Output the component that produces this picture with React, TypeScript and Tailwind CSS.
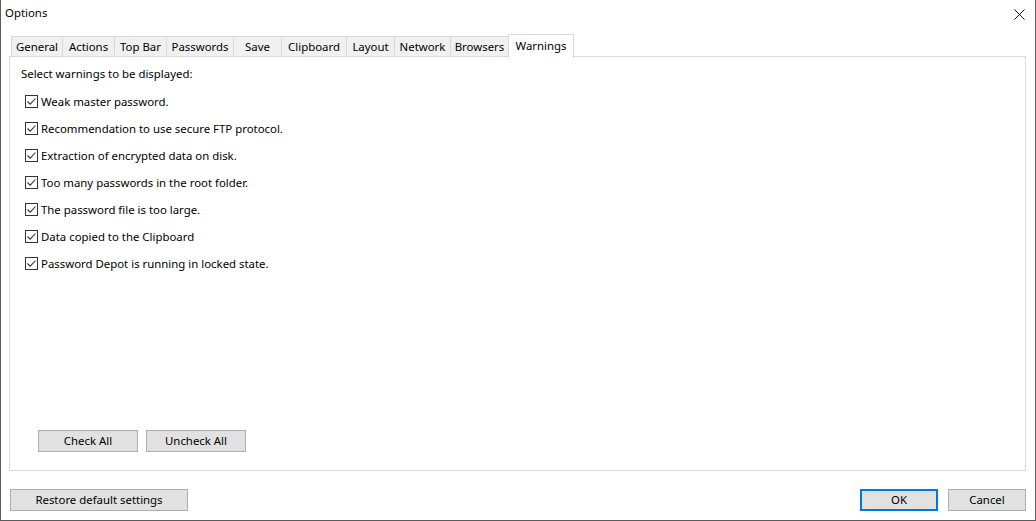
import React from "react";

const tabs: { label: string; w: string }[] = [
  { label: "General", w: "w-[51px]" },
  { label: "Actions", w: "w-[52px]" },
  { label: "Top Bar", w: "w-[52px]" },
  { label: "Passwords", w: "w-[67px]" },
  { label: "Save", w: "w-[48px]" },
  { label: "Clipboard", w: "w-[65px]" },
  { label: "Layout", w: "w-[48px]" },
  { label: "Network", w: "w-[56px]" },
  { label: "Browsers", w: "w-[58px]" },
];

const warnings = [
  "Weak master password.",
  "Recommendation to use secure FTP protocol.",
  "Extraction of encrypted data on disk.",
  "Too many passwords in the root folder.",
  "The password file is too large.",
  "Data copied to the Clipboard",
  "Password Depot is running in locked state.",
];

function CheckBox() {
  return (
    <div className="w-[13px] h-[13px] border border-[#333333] bg-white flex items-center justify-center shrink-0">
      <svg width="11" height="11" viewBox="0 0 11 11">
        <path d="M1.5 5.5 L4.2 8.2 L9.5 2.5" fill="none" stroke="#333333" strokeWidth="1.1" />
      </svg>
    </div>
  );
}

export default function App() {
  return (
    <div
      className="w-[1036px] h-[521px] bg-white border-x border-b border-[#5c5c5c] flex flex-col text-[11.4px] text-black overflow-hidden"
      style={{ fontFamily: '"Noto Sans", "Liberation Sans", sans-serif' }}
    >
      <div className="h-[34px] flex items-start justify-between shrink-0">
        <div className="pl-[4px] pt-[5px] leading-[16px]">Options</div>
        <div className="h-[28px] pr-[10px] flex items-center">
          <svg width="11" height="11" viewBox="0 0 11 11">
            <path d="M0.5 0.5 L10.5 10.5 M10.5 0.5 L0.5 10.5" stroke="#111" strokeWidth="1" />
          </svg>
        </div>
      </div>

      <div className="px-[8px] pr-[9px] flex flex-col shrink-0">
        <div className="h-[22px] flex items-end pl-[2px] relative z-10">
          {tabs.map((t) => (
            <div
              key={t.label}
              className={`${t.w} h-[20px] border-t border-l border-[#d9d9d9] bg-[#f0f0f0] flex items-center justify-center leading-[16px]`}
            >
              {t.label}
            </div>
          ))}
          <div className="w-[66px] h-[24px] mb-[-2px] border-t border-x border-[#d9d9d9] bg-white flex items-start justify-center pt-[3px] leading-[16px]">
            Warnings
          </div>
        </div>
        <div className="h-[415px] border border-[#d9d9d9] bg-white flex flex-col justify-between">
          <div className="pl-[11px]">
            <div className="mt-[9px] h-[16px] leading-[16px]">Select warnings to be displayed:</div>
            <div className="mt-[6px] pl-[4px] flex flex-col">
              {warnings.map((w) => (
                <div key={w} className="h-[27px] flex items-center gap-[3px]">
                  <CheckBox />
                  <span className="leading-[16px]">{w}</span>
                </div>
              ))}
            </div>
          </div>
          <div className="pl-[28px] pb-[18px] flex gap-[8px]">
            <button className="w-[100px] h-[22px] bg-[#e1e1e1] border border-[#adadad] leading-[16px]">Check All</button>
            <button className="w-[100px] h-[22px] bg-[#e1e1e1] border border-[#adadad] leading-[16px]">Uncheck All</button>
          </div>
        </div>
      </div>

      <div className="mt-[18px] pl-[9px] pr-[9px] flex justify-between shrink-0">
        <button className="w-[178px] h-[22px] bg-[#e1e1e1] border border-[#adadad] leading-[16px]">Restore default settings</button>
        <div className="flex gap-[10px]">
          <button className="w-[78px] h-[22px] bg-[#e1e1e1] border-2 border-[#0078d7] leading-[16px]">OK</button>
          <button className="w-[78px] h-[22px] bg-[#e1e1e1] border border-[#adadad] leading-[16px]">Cancel</button>
        </div>
      </div>
    </div>
  );
}
